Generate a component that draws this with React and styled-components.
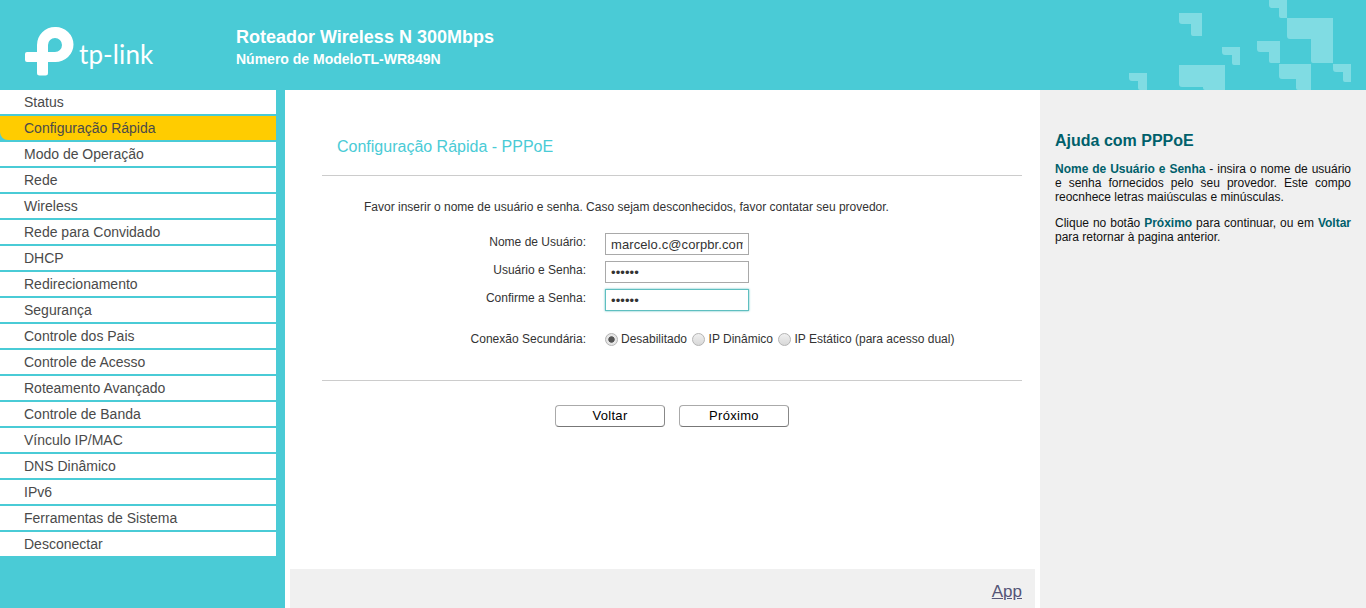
import React from "react";
import styled, { createGlobalStyle } from "styled-components";

const Global = createGlobalStyle`
  html, body { margin: 0; padding: 0; height: 608px; overflow: hidden; background: #fff; }
  body { font-family: "Liberation Sans", Arial, sans-serif; font-size: 12px; color: #333; }
  * { box-sizing: border-box; }
`;

const Page = styled.div`
  width: 1366px;
  height: 608px;
  display: flex;
  flex-direction: column;
  overflow: hidden;
`;

const Header = styled.header`
  position: relative;
  height: 90px;
  flex: none;
  background: #4acbd6;
  display: flex;
  align-items: flex-start;
  padding-left: 25px;
  color: #fff;
`;

const Logo = styled.div`
  width: 211px;
  height: 90px;
  flex: none;
  display: flex;
  align-items: flex-start;
  padding-top: 27px;
`;

const Wordmark = styled.span`
  font-family: Lato, "Open Sans", sans-serif;
  font-weight: 400;
  font-size: 26px;
  line-height: 30px;
  letter-spacing: 0.1px;
  margin: 12px 0 0 4px;
  color: #fff;
`;

const Model = styled.div`
  padding-top: 26px;
`;

const ModelName = styled.div`
  font-size: 18px;
  line-height: 22px;
  font-weight: bold;
`;

const ModelNumber = styled.div`
  font-size: 14px;
  line-height: 18px;
  font-weight: bold;
  margin-top: 2px;
`;

const Pattern = styled.svg`
  position: absolute;
  right: 0;
  top: 0;
`;

const Body = styled.div`
  flex: 1;
  display: flex;
  min-height: 0;
`;

const Side = styled.nav`
  width: 285px;
  flex: none;
  background: #4acbd6;
  display: flex;
  flex-direction: column;
  gap: 2px;
  padding-right: 9px;
`;

const NavItem = styled.a`
  display: block;
  height: 24px;
  line-height: 24px;
  padding-left: 24px;
  font-size: 14px;
  color: #4a4a4a;
  background: ${(p) => (p.$active ? "#ffcc00" : "#fff")};
  border-bottom-left-radius: ${(p) => (p.$active ? "8px" : "0")};
`;

const Center = styled.main`
  width: 755px;
  flex: none;
  display: flex;
  flex-direction: column;
  background: #fff;
`;

const Content = styled.div`
  flex: 1;
  padding: 0 18px 0 37px;
`;

const Title = styled.h1`
  margin: 0;
  padding: 47px 0 0 15px;
  height: 85px;
  font-size: 16px;
  line-height: 20px;
  font-weight: normal;
  color: #4acbd6;
`;

const Rule = styled.hr`
  margin: 0;
  border: 0;
  height: 1px;
  background: #ccc;
`;

const Intro = styled.p`
  margin: 0;
  padding: 24px 0 0 42px;
  font-size: 12px;
  line-height: 14px;
  color: #333;
`;

const Form = styled.div`
  display: flex;
  flex-direction: column;
  padding-top: 19px;
`;

const FormRow = styled.div`
  display: flex;
  align-items: flex-start;
  height: 28px;
`;

const RadioRow = styled(FormRow)`
  margin-top: 15px;
  height: 48px;
`;

const Label = styled.label`
  width: 264px;
  flex: none;
  text-align: right;
  font-size: 12px;
  line-height: 14px;
  padding-top: 2px;
  color: #333;
`;

const RadioLabel = styled(Label)`
  padding-top: 0;
`;

const Field = styled.input`
  width: 144px;
  height: 22px;
  margin-left: 19px;
  padding: 0 5px;
  border: 1px solid ${(p) => (p.$focus ? "#5fbfc0" : "#a9a9a9")};
  box-shadow: ${(p) => (p.$focus ? "0 0 2px #5fbfc0" : "none")};
  outline: none;
  background: #fff;
  font-family: "Liberation Sans", Arial, sans-serif;
  font-size: 13px;
  color: #333;
  letter-spacing: 0.1px;
`;

const Radios = styled.div`
  display: flex;
  align-items: center;
  margin-left: 19px;
`;

const Radio = styled.input`
  appearance: none;
  width: 13px;
  height: 13px;
  margin: 0 ${(p) => (p.checked ? "3px" : "4px")} 0 0;
  border-radius: 50%;
  border: 1px solid #b4b4b4;
  background: ${(p) =>
    p.checked
      ? "radial-gradient(circle, #555 0 2.8px, #e6e6e6 3.6px)"
      : "linear-gradient(#f0f0f0, #d8d8d8)"};
`;

const RadioText = styled.span`
  font-size: 12px;
  line-height: 14px;
  color: #333;
  margin-right: 4.5px;
`;

const Buttons = styled.div`
  display: flex;
  justify-content: center;
  gap: 14px;
  padding-top: 24px;
`;

const Button = styled.button`
  width: 110px;
  height: 22px;
  padding: 0 0 2px;
  background: #fff;
  border: 1px solid #aaa;
  border-bottom-color: #777;
  border-right-color: #888;
  border-radius: 4px;
  font-family: "Liberation Sans", Arial, sans-serif;
  font-size: 13px;
  letter-spacing: 0.3px;
  color: #000;
`;

const FooterBar = styled.footer`
  height: 39px;
  flex: none;
  margin: 0 5px;
  background: #f0f0f0;
  display: flex;
  justify-content: flex-end;
  align-items: flex-start;
  padding: 13px 13px 0 0;
`;

const AppLink = styled.a`
  font-size: 17px;
  line-height: 20px;
  color: #555577;
  text-decoration: underline;
`;

const Help = styled.aside`
  flex: 1;
  background: #f0f0f0;
  padding: 41px 15px 0;
`;

const HelpTitle = styled.h2`
  margin: 0 0 11px;
  font-size: 16px;
  line-height: 20px;
  font-weight: bold;
  color: #00606b;
`;

const HelpText = styled.p`
  margin: 0 0 12px;
  font-size: 12px;
  line-height: 14px;
  text-align: justify;
  color: #111;
`;

const Strong = styled.b`
  color: #00606b;
`;

const Term = styled.span`
  color: #00606b;
  font-weight: bold;
`;

const menu = [
  "Status", "Configuração Rápida", "Modo de Operação", "Rede", "Wireless",
  "Rede para Convidado", "DHCP", "Redirecionamento", "Segurança", "Controle dos Pais",
  "Controle de Acesso", "Roteamento Avançado", "Controle de Banda", "Vínculo IP/MAC",
  "DNS Dinâmico", "IPv6", "Ferramentas de Sistema", "Desconectar",
];

// x, y, right, bottom, horizontal bar bottom, vertical bar left
const blocks = [
  [79, 13, 102, 36, 24, 91],
  [169, 0, 187, 18, 8, 179],
  [187, 18, 233, 63, 39, 211],
  [157, 41, 180, 63, 52, 169],
  [122, 47, 140, 65, 55, 132],
  [179, 64, 211, 90, 79, 196],
  [233, 64, 251, 82, 72, 243],
  [79, 65, 125, 90, 87, 103],
  [29, 73, 47, 90, 81, 38],
];

const blockPath = ([x, y, r, b, h, v]) =>
  `M${x} ${y}H${r}V${b}H${v + 2}a2 2 0 0 1-2-2V${h}H${x + 3}a3 3 0 0 1-3-3Z`;

export default function App() {
  return (
    <Page>
      <Global />
      <Header>
        <Logo>
          <svg width="50" height="50" viewBox="25 27 50 50">
            <path
              fill="#fff"
              fillRule="evenodd"
              d="M37 52V45A18 18 0 0 1 55 27A18 17.5 0 0 1 73.500 44.500A18 17.500 0 0 1 55 62H48V73a2.500 2.500 0 0 1-2.500 2.500H39.500a2.500 2.500 0 0 1-2.500-2.500V62H27a2 2 0 0 1-2-2V54a2 2 0 0 1 2-2ZM48 52H55A7 7 0 0 0 62 45A7 7 0 0 0 55 38A7 7 0 0 0 48 45Z"
            />
          </svg>
          <Wordmark>tp-link</Wordmark>
        </Logo>
        <Model>
          <ModelName>Roteador Wireless N 300Mbps</ModelName>
          <ModelNumber>Número de ModeloTL-WR849N</ModelNumber>
        </Model>
        <Pattern width="266" height="90" viewBox="0 0 266 90">
          {blocks.map((b, i) => (
            <path key={i} d={blockPath(b)} fill="#80dce3" />
          ))}
        </Pattern>
      </Header>
      <Body>
        <Side>
          {menu.map((m) => (
            <NavItem key={m} $active={m === "Configuração Rápida"}>{m}</NavItem>
          ))}
        </Side>
        <Center>
          <Content>
            <Title>Configuração Rápida - PPPoE</Title>
            <Rule />
            <Intro>Favor inserir o nome de usuário e senha. Caso sejam desconhecidos, favor contatar seu provedor.</Intro>
            <Form>
              <FormRow>
                <Label>Nome de Usuário:</Label>
                <Field type="text" defaultValue="marcelo.c@corpbr.com" />
              </FormRow>
              <FormRow>
                <Label>Usuário e Senha:</Label>
                <Field type="password" defaultValue="123456" />
              </FormRow>
              <FormRow>
                <Label>Confirme a Senha:</Label>
                <Field type="password" defaultValue="123456" $focus />
              </FormRow>
              <RadioRow>
                <RadioLabel>Conexão Secundária:</RadioLabel>
                <Radios>
                  <Radio type="radio" name="sec" checked readOnly />
                  <RadioText>Desabilitado</RadioText>
                  <Radio type="radio" name="sec2" />
                  <RadioText>IP Dinâmico</RadioText>
                  <Radio type="radio" name="sec3" />
                  <RadioText>IP Estático (para acesso dual)</RadioText>
                </Radios>
              </RadioRow>
            </Form>
            <Rule />
            <Buttons>
              <Button>Voltar</Button>
              <Button>Próximo</Button>
            </Buttons>
          </Content>
          <FooterBar>
            <AppLink>App</AppLink>
          </FooterBar>
        </Center>
        <Help>
          <HelpTitle>Ajuda com PPPoE</HelpTitle>
          <HelpText>
            <Strong>Nome de Usuário e Senha</Strong> - insira o nome de usuário e senha fornecidos pelo seu provedor. Este compo reocnhece letras maiúsculas e minúsculas.
          </HelpText>
          <HelpText>
            Clique no botão <Term>Próximo</Term> para continuar, ou em <Term>Voltar</Term> para retornar à pagina anterior.
          </HelpText>
        </Help>
      </Body>
    </Page>
  );
}
